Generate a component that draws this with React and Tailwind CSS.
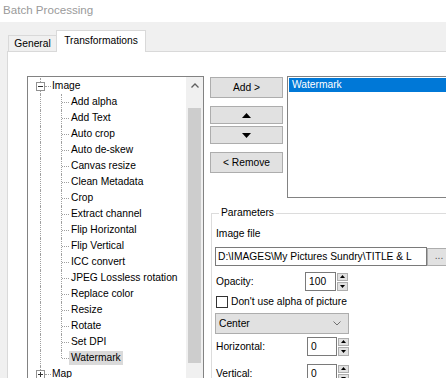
import React from "react";

const children = [
  "Add alpha",
  "Add Text",
  "Auto crop",
  "Auto de-skew",
  "Canvas resize",
  "Clean Metadata",
  "Crop",
  "Extract channel",
  "Flip Horizontal",
  "Flip Vertical",
  "ICC convert",
  "JPEG Lossless rotation",
  "Replace color",
  "Resize",
  "Rotate",
  "Set DPI",
  "Watermark",
];

const dot = "border-dotted border-[#a0a0a0]";

const ExpandBox = ({ open }) => (
  <span className="absolute left-[8px] top-[4px] flex h-[9px] w-[9px] items-center justify-center border border-[#919191] bg-white">
    <span className="relative block h-px w-[5px] bg-[#333]">
      {!open && (
        <span className="absolute left-[2px] top-[-2px] block h-[5px] w-px bg-[#333]" />
      )}
    </span>
  </span>
);

const RootRow = ({ label, open }) => (
  <div className="relative flex h-4 items-center">
    <span className={`absolute left-[12px] top-0 bottom-0 border-l ${dot}`} />
    <ExpandBox open={open} />
    <span className={`absolute left-[17px] top-[8px] w-[6px] border-t ${dot}`} />
    <span className="ml-[24px]">{label}</span>
  </div>
);

const ChildRow = ({ label, last, selected }) => (
  <div className="relative flex h-4 items-center">
    <span className={`absolute left-[12px] top-0 bottom-0 border-l ${dot}`} />
    <span
      className={`absolute left-[33px] top-0 border-l ${dot} ${last ? "h-[8px]" : "bottom-0"}`}
    />
    <span className={`absolute left-[34px] top-[8px] w-[7px] border-t ${dot}`} />
    <span
      className={`ml-[41px] px-[2px] leading-[14px] ${selected ? "bg-[#dadada]" : ""}`}
    >
      {label}
    </span>
  </div>
);

const Tri = ({ up, w = 9, h = 5 }) => (
  <svg width={w} height={h} viewBox="0 0 9 5">
    <polygon points={up ? "0,5 9,5 4.5,0" : "0,0 9,0 4.5,5"} fill="#000" />
  </svg>
);

const Spin = () => (
  <div className="ml-px flex h-[18px] w-[11px] flex-col gap-px">
    <div className="flex flex-1 items-center justify-center border border-[#adadad] bg-[#e1e1e1]">
      <Tri up w={5} h={3} />
    </div>
    <div className="flex flex-1 items-center justify-center border border-[#adadad] bg-[#e1e1e1]">
      <Tri w={5} h={3} />
    </div>
  </div>
);

const NumBox = ({ value, w }) => (
  <div
    className={`flex h-[19px] ${w} items-center border border-[#7a7a7a] bg-white pl-[3px]`}
  >
    {value}
  </div>
);

const Btn = ({ children, h = "h-[21px]", mt = "" }) => (
  <div
    className={`${h} ${mt} flex items-center justify-center border border-[#adadad] bg-[#e1e1e1]`}
  >
    {children}
  </div>
);

export default function App() {
  return (
    <div className="h-[378px] w-[446px] overflow-hidden bg-[#f0f0f0] font-['Liberation_Sans',Arial,sans-serif] text-[10.25px] leading-[14px] text-black">
      <div className="h-[22px] bg-white pl-[3px] pt-[3px] text-[11.6px] text-[#9a9a9a]">
        Batch Processing
      </div>

      <div className="pl-[7px] pt-[8px]">
        {/* tabs */}
        <div className="flex h-[21px] items-end pl-px">
          <div className="flex h-[16px] w-[48px] items-center justify-center border border-r-0 border-b-0 border-[#d9d9d9] bg-[#f0f0f0]">
            General
          </div>
          <div className="relative z-10 -mb-px flex h-[22px] w-[90px] items-start justify-center border border-b-0 border-[#d9d9d9] bg-white pt-[3px]">
            Transformations
          </div>
        </div>

        {/* panel */}
        <div className="flex h-[340px] w-[460px] border border-[#d9d9d9] bg-white pl-[19px] pt-[24px]">
          {/* tree */}
          <div className="flex h-[320px] w-[177px] border border-[#828282] bg-white">
            <div className="flex-1 overflow-hidden pt-px">
              <RootRow label="Image" open />
              {children.map((c, i) => (
                <ChildRow
                  key={c}
                  label={c}
                  last={i === children.length - 1}
                  selected={c === "Watermark"}
                />
              ))}
              <RootRow label="Map" />
            </div>
            <div className="flex w-[17px] flex-col bg-[#f0f0f0]">
              <div className="flex h-[17px] items-center justify-center">
                <svg width="8" height="5" viewBox="0 0 8 5">
                  <polyline points="0.5,4.5 4,1 7.5,4.5" fill="none" stroke="#606060" strokeWidth="1.3" />
                </svg>
              </div>
              <div className="h-[14px]" />
              <div className="mx-[2px] h-[255px] bg-[#cdcdcd]" />
            </div>
          </div>

          {/* right side */}
          <div className="ml-[6px] flex flex-col">
            <div className="flex items-start">
              <div className="mt-px flex w-[73px] flex-col">
                <Btn>Add &gt;</Btn>
                <Btn h="h-[18px]" mt="mt-[8px]">
                  <Tri up />
                </Btn>
                <Btn h="h-[18px]" mt="mt-[2px]">
                  <Tri />
                </Btn>
                <Btn mt="mt-[8px]">&lt; Remove</Btn>
              </div>
              <div className="ml-[4px] h-[122px] w-[170px] border border-[#828282] bg-white p-px">
                <div className="h-[14px] bg-[#0078d7] pl-[3px] text-white">
                  Watermark
                </div>
              </div>
            </div>

            {/* parameters group */}
            <div className="ml-px mt-[15px] w-[250px] border-l border-t border-[#dcdcdc] pl-[3px]">
              <div className="-mt-[8px] ml-[4px] w-fit bg-white px-[2px]">
                Parameters
              </div>
              <div className="mt-[7px] pl-px">Image file</div>
              <div className="mt-[6px] flex items-center">
                <div className="flex h-[19px] w-[212px] items-center overflow-hidden whitespace-nowrap border border-[#7a7a7a] bg-white pl-[2px]">
                  D:\IMAGES\My Pictures Sundry\TITLE &amp; L
                </div>
                <div className="flex h-[18px] w-[24px] items-start justify-center border border-[#adadad] bg-[#e1e1e1] text-[#555]">
                  ...
                </div>
              </div>

              <div className="mt-[6px] flex h-[19px] items-center">
                <div className="w-[90px] pl-px">Opacity:</div>
                <NumBox value="100" w="w-[31px]" />
                <Spin />
              </div>

              <div className="mt-[4px] flex h-[13px] items-center">
                <div className="ml-px h-[12px] w-[12px] border border-[#333] bg-white" />
                <div className="ml-[3px]">Don&apos;t use alpha of picture</div>
              </div>

              <div className="mt-[5px] flex h-[21px] w-[134px] items-center justify-between border border-[#adadad] bg-[#e1e1e1] pl-[3px] pr-[7px]">
                <span>Center</span>
                <svg width="8" height="5" viewBox="0 0 8 5">
                  <polyline points="0.5,0.5 4,4 7.5,0.5" fill="none" stroke="#707070" strokeWidth="1" />
                </svg>
              </div>

              <div className="mt-[3px] flex h-[19px] items-center">
                <div className="w-[92px] pl-px">Horizontal:</div>
                <NumBox value="0" w="w-[30px]" />
                <Spin />
              </div>

              <div className="mt-[8px] flex h-[19px] items-center">
                <div className="w-[92px] pl-px">Vertical:</div>
                <NumBox value="0" w="w-[30px]" />
                <Spin />
              </div>
            </div>
          </div>
        </div>
      </div>
    </div>
  );
}
